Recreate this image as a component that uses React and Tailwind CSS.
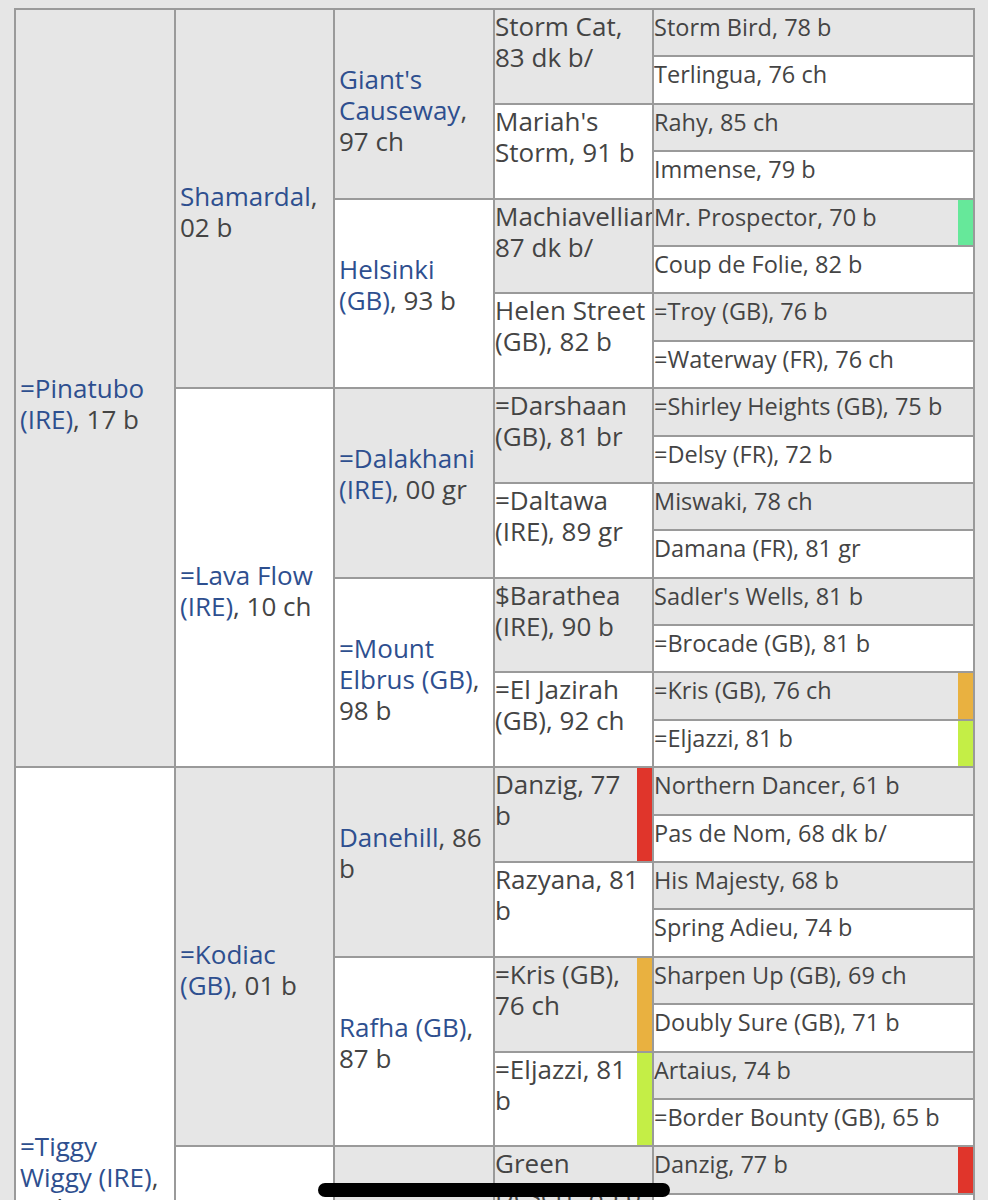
import React from 'react'

// pedigree of Pinatubo, one list per generation (top to bottom)
const GENS = [
  [
    { link: '=Pinatubo (IRE)', rest: ', 17 b' },
    { link: '=Tiggy Wiggy (IRE)', rest: ', 12 b' },
  ],
  [
    { link: 'Shamardal', rest: ', 02 b' },
    { link: '=Lava Flow (IRE)', rest: ', 10 ch' },
    { link: '=Kodiac (GB)', rest: ', 01 b' },
    { link: "=Kheleyf's Silver (IRE)", rest: ', 05 gr' },
  ],
  [
    { link: "Giant's Causeway", rest: ', 97 ch' },
    { link: 'Helsinki (GB)', rest: ', 93 b' },
    { link: '=Dalakhani (IRE)', rest: ', 00 gr' },
    { link: '=Mount Elbrus (GB)', rest: ', 98 b' },
    { link: 'Danehill', rest: ', 86 b' },
    { link: 'Rafha (GB)', rest: ', 87 b' },
    { link: 'Kheleyf', rest: ', 01 dk b/' },
    { link: '=Silver Arrow (IRE)', rest: ', 96 gr' },
  ],
  [
    { text: 'Storm Cat, 83 dk b/' },
    { text: "Mariah's Storm, 91 b" },
    { text: 'Machiavellian, 87 dk b/' },
    { text: 'Helen Street (GB), 82 b' },
    { text: '=Darshaan (GB), 81 br' },
    { text: '=Daltawa (IRE), 89 gr' },
    { text: '$Barathea (IRE), 90 b' },
    { text: '=El Jazirah (GB), 92 ch' },
    { text: 'Danzig, 77 b', bar: 'red' },
    { text: 'Razyana, 81 b' },
    { text: '=Kris (GB), 76 ch', bar: 'orange' },
    { text: '=Eljazzi, 81 b', bar: 'lime' },
    { text: 'Green Desert, 83 b' },
    { text: 'Society Lady, 92 b' },
    { text: '=Shernazar, 81 b' },
    { text: '=Silver Sky (GB), 88 gr' },
  ],
  [
    { text: 'Storm Bird, 78 b' },
    { text: 'Terlingua, 76 ch' },
    { text: 'Rahy, 85 ch' },
    { text: 'Immense, 79 b' },
    { text: 'Mr. Prospector, 70 b', bar: 'green' },
    { text: 'Coup de Folie, 82 b' },
    { text: '=Troy (GB), 76 b' },
    { text: '=Waterway (FR), 76 ch' },
    { text: '=Shirley Heights (GB), 75 b' },
    { text: '=Delsy (FR), 72 b' },
    { text: 'Miswaki, 78 ch' },
    { text: 'Damana (FR), 81 gr' },
    { text: "Sadler's Wells, 81 b" },
    { text: '=Brocade (GB), 81 b' },
    { text: '=Kris (GB), 76 ch', bar: 'orange' },
    { text: '=Eljazzi, 81 b', bar: 'lime' },
    { text: 'Northern Dancer, 61 b' },
    { text: 'Pas de Nom, 68 dk b/' },
    { text: 'His Majesty, 68 b' },
    { text: 'Spring Adieu, 74 b' },
    { text: 'Sharpen Up (GB), 69 ch' },
    { text: 'Doubly Sure (GB), 71 b' },
    { text: 'Artaius, 74 b' },
    { text: '=Border Bounty (GB), 65 b' },
    { text: 'Danzig, 77 b', bar: 'red' },
    { text: 'Foreign Courier, 79 b' },
    { text: 'Mr. Prospector, 70 b', bar: 'green' },
    { text: 'Shelf Talker, 80 b' },
    { text: 'Busted, 63 b' },
    { text: '=Sharmeen (FR), 72 b' },
    { text: '=Kalaglow (IRE), 78 gr' },
    { text: '=Nevada Sky (GB), 80 b' },
  ],
]

const BAR = {
  red: 'bg-[#e0352b]',
  orange: 'bg-[#e9b140]',
  lime: 'bg-[#c4ee46]',
  green: 'bg-[#66e89a]',
}

const COL = ['col-start-1', 'col-start-2', 'col-start-3', 'col-start-4', 'col-start-5']
const TEXT = [
  'pt-[363px] pl-[4px] text-[26px] leading-[31px]',
  'pt-[171px] pl-[4px] text-[26px] leading-[31px]',
  'pt-[54px] pl-[4px] text-[26px] leading-[31px]',
  'pt-[1px] text-[26px] leading-[31px]',
  'pt-[3px] text-[23.5px] leading-[28px]',
]

function Cell({ horse, gen, index }) {
  const span = 32 / (2 ** (gen + 1))
  const shade = index % 2 === 0 ? 'bg-[#e6e6e6]' : 'bg-white'
  return (
    <div
      className={`${COL[gen]} ${shade} flex overflow-hidden`}
      style={{ gridRow: `${index * span + 1} / span ${span}` }}
    >
      <div className={`flex-1 min-w-0 ${TEXT[gen]}`}>
        {horse.link ? (
          <>
            <a href="#" className="text-[#2e4f8f]">{horse.link}</a>
            <span>{horse.rest}</span>
          </>
        ) : (
          horse.text
        )}
      </div>
      {horse.bar && <div className={`w-[15px] shrink-0 ${BAR[horse.bar]}`} />}
    </div>
  )
}

export default function App() {
  return (
    <div
      className="relative h-[1200px] overflow-hidden bg-[#e6e6e6] pt-[8px] pl-[14px] text-[#444444]"
      style={{ fontFamily: '"Open Sans", "Noto Sans", sans-serif' }}
    >
      <div className="grid w-fit grid-cols-[158px_157px_158px_157px_319px] grid-rows-[repeat(32,45.4px)] gap-[2px] bg-[#9a9a9a] p-[2px]">
        {GENS.map((list, gen) =>
          list.map((horse, index) => (
            <Cell key={`${gen}-${index}`} horse={horse} gen={gen} index={index} />
          ))
        )}
      </div>

      {/* phone home indicator */}
      <div className="absolute left-[318px] top-[1183px] h-[14px] w-[352px] rounded-full bg-black" />
    </div>
  )
}
